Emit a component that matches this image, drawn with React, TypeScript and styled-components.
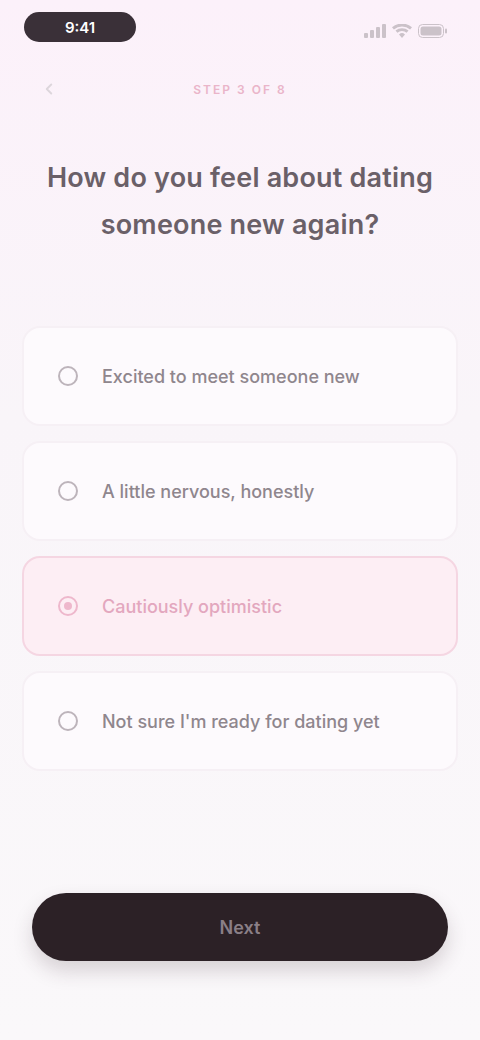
import React, { useState } from "react";
import styled, { createGlobalStyle } from "styled-components";

const Global = createGlobalStyle`
  html, body { margin: 0; padding: 0; }
  body {
    font-family: Inter, "Noto Sans", "Liberation Sans", sans-serif;
    background: #f9f6f9;
    -webkit-font-smoothing: antialiased;
  }
  * { box-sizing: border-box; }
`;

const Page = styled.div`
  min-height: 1040px;
  display: flex;
  flex-direction: column;
  padding: 0 22px 79px;
  background: linear-gradient(180deg, #fcf1fa 0%, #f9f5f9 40%, #faf8fa 100%);
`;

const StatusBar = styled.div`
  height: 54px;
  padding-top: 12px;
  display: flex;
  justify-content: space-between;
  align-items: flex-start;
`;

const TimePill = styled.div`
  width: 112px;
  height: 30px;
  margin-left: 2px;
  border-radius: 15px;
  background: #3a3038;
  color: #ffffff;
  font-size: 15px;
  font-weight: 600;
  display: flex;
  align-items: center;
  justify-content: center;
`;

const StatusIcons = styled.div`
  display: flex;
  align-items: center;
  gap: 6px;
  margin-top: 12px;
  margin-right: 10px;
  color: #cbc2c9;
`;

const HeaderRow = styled.div`
  margin-top: 26px;
  display: grid;
  grid-template-columns: 40px 1fr 40px;
  align-items: center;
  height: 16px;
`;

const BackButton = styled.button`
  border: none;
  background: none;
  padding: 0;
  margin-left: 18px;
  color: #ddd6dc;
  display: flex;
  align-items: center;
`;

const StepLabel = styled.div`
  text-align: center;
  font-size: 12px;
  font-weight: 600;
  letter-spacing: 2px;
  color: #eab5c9;
  text-transform: uppercase;
`;

const Title = styled.h1`
  margin: 58px 0 0;
  text-align: center;
  font-size: 27px;
  line-height: 47px;
  font-weight: 600;
  color: #6a6068;
  letter-spacing: 0.2px;
`;

const Options = styled.div`
  margin-top: 78px;
  display: flex;
  flex-direction: column;
  gap: 15px;
`;

const OptionCard = styled.button<{ $selected: boolean }>`
  height: 100px;
  width: 100%;
  display: flex;
  align-items: center;
  gap: 24px;
  padding: 0 0 0 34px;
  border-radius: 18px;
  border: 2px solid ${(p) => (p.$selected ? "#f5d6e2" : "#f6f0f5")};
  background: ${(p) => (p.$selected ? "#fdeef4" : "#fdfafd")};
  font-family: inherit;
  cursor: pointer;
  text-align: left;
`;

const Radio = styled.span<{ $selected: boolean }>`
  width: 20px;
  height: 20px;
  flex: 0 0 20px;
  border-radius: 50%;
  border: 2px solid ${(p) => (p.$selected ? "#eeb8cc" : "#bdb4bb")};
  display: flex;
  align-items: center;
  justify-content: center;
  &::after {
    content: "";
    width: 8px;
    height: 8px;
    border-radius: 50%;
    background: ${(p) => (p.$selected ? "#eeb8cc" : "transparent")};
  }
`;

const OptionText = styled.span<{ $selected: boolean }>`
  font-size: 18px;
  font-weight: 500;
  color: ${(p) => (p.$selected ? "#e3a7be" : "#8f868d")};
`;

const Spacer = styled.div`
  flex: 1;
`;

const NextButton = styled.button`
  height: 68px;
  margin: 0 10px;
  border: none;
  border-radius: 34px;
  background: #2c2126;
  color: #8a7f86;
  font-family: inherit;
  font-size: 18px;
  font-weight: 600;
  box-shadow: 0 10px 20px rgba(60, 40, 50, 0.18);
  cursor: pointer;
`;

const options = [
  "Excited to meet someone new",
  "A little nervous, honestly",
  "Cautiously optimistic",
  "Not sure I'm ready for dating yet",
];

export default function App() {
  const [selected, setSelected] = useState(2);
  return (
    <>
      <Global />
      <Page>
        <StatusBar>
          <TimePill>9:41</TimePill>
          <StatusIcons>
            <svg width="22" height="14" viewBox="0 0 22 14" fill="currentColor">
              <rect x="0" y="9" width="4" height="5" rx="1" />
              <rect x="6" y="6" width="4" height="8" rx="1" />
              <rect x="12" y="3" width="4" height="11" rx="1" />
              <rect x="18" y="0" width="4" height="14" rx="1" />
            </svg>
            <svg width="20" height="14" viewBox="0 0 20 14" fill="currentColor">
              <path d="M10 14l3-3.6a4.6 4.6 0 0 0-6 0L10 14zM3.5 6.6l1.9 2.2a7 7 0 0 1 9.2 0l1.9-2.2a10 10 0 0 0-13 0zM0 3.2l1.9 2.2a12.6 12.6 0 0 1 16.2 0L20 3.2A15.6 15.6 0 0 0 0 3.2z" />
            </svg>
            <svg width="30" height="14" viewBox="0 0 30 14" fill="none">
              <rect x="0.5" y="0.5" width="25" height="13" rx="4" stroke="currentColor" />
              <rect x="2.5" y="2.5" width="21" height="9" rx="2.5" fill="currentColor" />
              <rect x="27" y="4.5" width="2" height="5" rx="1" fill="currentColor" />
            </svg>
          </StatusIcons>
        </StatusBar>

        <HeaderRow>
          <BackButton aria-label="Back">
            <svg width="18" height="18" viewBox="0 0 24 24" fill="none" stroke="currentColor" strokeWidth="2.5" strokeLinecap="round" strokeLinejoin="round">
              <path d="M15 18l-6-6 6-6" />
            </svg>
          </BackButton>
          <StepLabel>Step 3 of 8</StepLabel>
          <span />
        </HeaderRow>

        <Title>
          How do you feel about dating
          <br />
          someone new again?
        </Title>

        <Options>
          {options.map((o, i) => (
            <OptionCard key={o} $selected={i === selected} onClick={() => setSelected(i)}>
              <Radio $selected={i === selected} />
              <OptionText $selected={i === selected}>{o}</OptionText>
            </OptionCard>
          ))}
        </Options>

        <Spacer />
        <NextButton>Next</NextButton>
      </Page>
    </>
  );
}
